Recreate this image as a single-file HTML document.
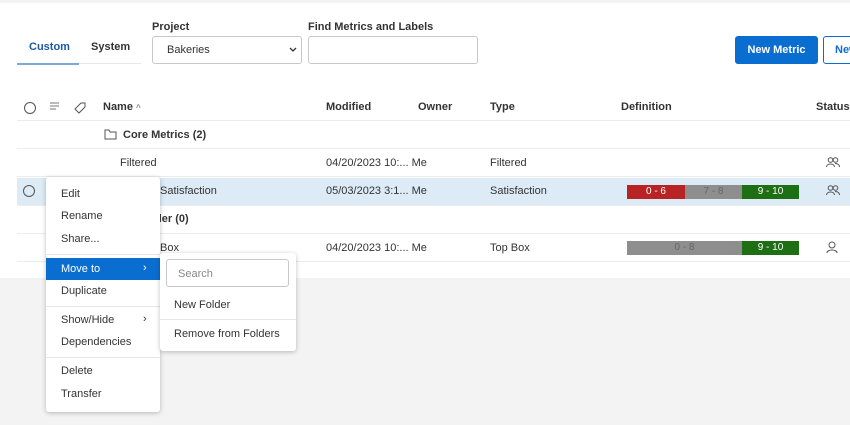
<!DOCTYPE html>
<html><head><style>
*{box-sizing:border-box;margin:0;padding:0}
body{width:850px;height:425px;overflow:hidden;background:#f3f3f3;font-family:"Liberation Sans",sans-serif;font-size:11px;color:#333;position:relative}
.a{position:absolute}
.main{left:0;top:3px;width:850px;height:275px;background:#fff}
.b{font-weight:bold;color:#333}
.row{position:absolute;left:17px;width:833px;border-bottom:1px solid #ececec}
.bar{position:absolute;height:14px;color:#fff;font-size:10px;text-align:center;line-height:14px}
.mi{position:absolute;left:15px;font-size:11px;color:#333}
.sep{position:absolute;left:0;width:100%;height:1px;background:#e6e6e6}
</style></head><body>
<div class="a main"></div>
<div class="a b" style="left:152px;top:21px">Project</div>
<div class="a b" style="left:308px;top:21px">Find Metrics and Labels</div>
<div class="a b" style="left:29px;top:41px;color:#1e5aa0">Custom</div>
<div class="a b" style="left:91px;top:41px">System</div>
<div class="a" style="left:17px;top:63px;width:124px;height:1px;background:#e8e8e8"></div>
<div class="a" style="left:17px;top:63px;width:62px;height:2px;background:#7fa8d6"></div>
<div class="a" style="left:152px;top:36px;width:150px;height:28px;border:1px solid #c8c8c8;border-radius:3px"></div>
<div class="a" style="left:167px;top:44px">Bakeries</div>
<svg class="a" style="left:289px;top:47px" width="8" height="6"><path d="M1 1l3 3 3-3" fill="none" stroke="#333" stroke-width="1.3"/></svg>
<div class="a" style="left:308px;top:36px;width:170px;height:28px;border:1px solid #c8c8c8;border-radius:3px"></div>
<div class="a b" style="left:735px;top:36px;width:83px;height:28px;background:#0a6ed1;color:#fff;border-radius:3px;text-align:center;line-height:28px">New Metric</div>
<div class="a b" style="left:823px;top:36px;width:40px;height:28px;border:1px solid #0a6ed1;color:#0a6ed1;border-radius:3px;padding-left:11px;line-height:26px;background:#fff">New</div>
<!-- header -->
<div class="row" style="top:93px;height:28px"></div>
<div class="a" style="left:24px;top:102px;width:12px;height:12px;border:1px solid #555;border-radius:50%"></div>
<svg class="a" style="left:50px;top:102px" width="9" height="8"><path d="M0 1h9M0 4h9M0 7h6" stroke="#777"/></svg>
<svg class="a" style="left:74px;top:101px" width="14" height="14" viewBox="0 0 14 14"><path d="M7 2h4v4l-6 6-4-4z" fill="none" stroke="#555"/></svg>
<div class="a b" style="left:103px;top:101px">Name <span style="font-size:8px;color:#888">^</span></div>
<div class="a b" style="left:326px;top:101px">Modified</div>
<div class="a b" style="left:418px;top:101px">Owner</div>
<div class="a b" style="left:490px;top:101px">Type</div>
<div class="a b" style="left:621px;top:101px">Definition</div>
<div class="a b" style="left:816px;top:101px">Status</div>
<div class="row" style="top:121px;height:28px"></div>
<svg class="a" style="left:104px;top:129px" width="13" height="11"><path d="M1 1h4l1 2h6v7H1z" fill="none" stroke="#555"/></svg>
<div class="a b" style="left:123px;top:129px">Core Metrics (2)</div>
<div class="row" style="top:149px;height:28px"></div>
<div class="a" style="left:120px;top:157px">Filtered</div>
<div class="a" style="left:326px;top:157px">04/20/2023 10:... Me</div>
<div class="a" style="left:490px;top:157px">Filtered</div>
<svg class="a" style="left:826px;top:157px" width="14" height="11"><circle cx="4.5" cy="3" r="2.3" fill="none" stroke="#555"/><path d="M0.5 10c0-4 8-4 8 0" fill="none" stroke="#555"/><circle cx="9.5" cy="3" r="2.3" fill="none" stroke="#555"/><path d="M9 6.5c3 0 4.5 1.5 4.5 3.5" fill="none" stroke="#555"/></svg>
<div class="row" style="top:178px;height:28px;background:#dcebf6"></div>
<div class="a" style="left:23px;top:185px;width:12px;height:12px;border:1px solid #555;border-radius:50%"></div>
<div class="a" style="left:160px;top:185px">Satisfaction</div>
<div class="a" style="left:326px;top:185px">05/03/2023 3:1... Me</div>
<div class="a" style="left:490px;top:185px">Satisfaction</div>
<div class="bar" style="left:627px;top:185px;width:58px;background:#b82424">0 - 6</div>
<div class="bar" style="left:685px;top:185px;width:57px;background:#8e8e8e;color:#666">7 - 8</div>
<div class="bar" style="left:742px;top:185px;width:57px;background:#1e6e14">9 - 10</div>
<svg class="a" style="left:826px;top:185px" width="14" height="11"><circle cx="4.5" cy="3" r="2.3" fill="none" stroke="#555"/><path d="M0.5 10c0-4 8-4 8 0" fill="none" stroke="#555"/><circle cx="9.5" cy="3" r="2.3" fill="none" stroke="#555"/><path d="M9 6.5c3 0 4.5 1.5 4.5 3.5" fill="none" stroke="#555"/></svg>
<div class="row" style="top:206px;height:28px"></div>
<div class="a b" style="left:152px;top:213px">lder (0)</div>
<div class="row" style="top:234px;height:28px"></div>
<div class="a" style="left:160px;top:242px">Box</div>
<div class="a" style="left:326px;top:242px">04/20/2023 10:... Me</div>
<div class="a" style="left:490px;top:242px">Top Box</div>
<div class="bar" style="left:627px;top:241px;width:115px;background:#8e8e8e;color:#666">0 - 8</div>
<div class="bar" style="left:742px;top:241px;width:57px;background:#1e6e14">9 - 10</div>
<svg class="a" style="left:826px;top:241px" width="12" height="13"><circle cx="6" cy="4" r="3" fill="none" stroke="#555"/><path d="M1 12c0-4 10-4 10 0" fill="none" stroke="#555"/></svg>
<!-- menu -->
<div class="a" style="left:46px;top:177px;width:114px;height:235px;background:#fff;border-radius:3px;box-shadow:0 1px 5px rgba(0,0,0,.25)">
<div class="mi" style="top:11px">Edit</div>
<div class="mi" style="top:33px">Rename</div>
<div class="mi" style="top:56px">Share...</div>
<div class="sep" style="top:77px"></div>
<div class="a" style="left:0;top:81px;width:114px;height:22px;background:#0a6ed1"></div>
<div class="mi" style="top:86px;color:#fff">Move to</div>
<div class="a" style="left:97px;top:85px;color:#fff">&#8250;</div>
<div class="mi" style="top:108px">Duplicate</div>
<div class="sep" style="top:129px"></div>
<div class="mi" style="top:137px">Show/Hide</div>
<div class="a" style="left:97px;top:136px">&#8250;</div>
<div class="mi" style="top:159px">Dependencies</div>
<div class="sep" style="top:180px"></div>
<div class="mi" style="top:188px">Delete</div>
<div class="mi" style="top:211px">Transfer</div>
</div>
<div class="a" style="left:160px;top:253px;width:136px;height:98px;background:#fff;border-radius:3px;box-shadow:0 1px 5px rgba(0,0,0,.25)">
<div class="a" style="left:6px;top:6px;width:123px;height:28px;border:1px solid #c8c8c8;border-radius:3px;padding:8px 11px;color:#888">Search</div>
<div class="a" style="left:14px;top:46px">New Folder</div>
<div class="sep" style="top:66px"></div>
<div class="a" style="left:14px;top:75px">Remove from Folders</div>
</div>
</body></html>
